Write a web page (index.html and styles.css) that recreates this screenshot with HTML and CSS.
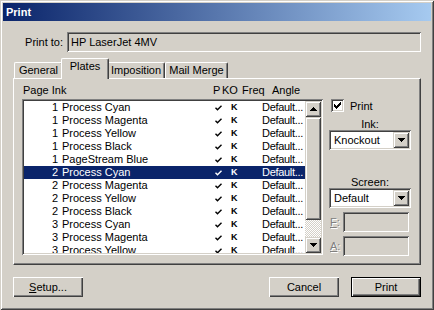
FILE: index.html
```html
<!DOCTYPE html>
<html lang="en">
<head>
  <meta charset="UTF-8">
  <title>Print</title>
  <link rel="stylesheet" href="styles.css">
</head>
<body>
  <div class="window">
    <div class="titlebar">Print</div>

    <div class="content">
      <div class="printto">
        <label>Print to:</label>
        <div class="field wide">HP LaserJet 4MV</div>
      </div>

      <div class="tabs">
        <div class="tab t-general">General</div>
        <div class="tab t-plates active">Plates</div>
        <div class="tab t-impo">Imposition</div>
        <div class="tab t-mail">Mail Merge</div>
      </div>

      <div class="panel">
        <div class="left">
          <div class="colhead">
            <span class="h-page">Page Ink</span>
            <span class="h-p">P</span>
            <span class="h-ko">KO</span>
            <span class="h-freq">Freq</span>
            <span class="h-angle">Angle</span>
          </div>

          <div class="list">
            <div class="rows" id="rows"></div>
            <div class="scrollbar">
              <div class="sb-btn">
                <svg width="7" height="4" viewBox="0 0 7 4" shape-rendering="crispEdges"><path d="M3 0h1v1h1v1h1v1h1v1H0V3h1V2h1V1h1z" fill="#000"/></svg>
              </div>
              <div class="sb-thumb"></div>
              <div class="sb-track"></div>
              <div class="sb-btn">
                <svg width="7" height="4" viewBox="0 0 7 4" shape-rendering="crispEdges"><path d="M0 0h7v1H6v1H5v1H4v1H3V3H2V2H1V1H0z" fill="#000"/></svg>
              </div>
            </div>
          </div>
        </div>

        <div class="side">
          <div class="check-row">
            <div class="box">
              <svg width="7" height="7" viewBox="0 0 7 7" shape-rendering="crispEdges"><path d="M6 0h1v3H6v1H5v1H4v1H3v1H2V6H1V5H0V2h1v1h1v1h1V3h1V2h1V1h1z" fill="#000"/></svg>
            </div>
            <span>Print</span>
          </div>

          <div class="side-label">Ink:</div>
          <div class="select">
            <span class="sel-text">Knockout</span>
            <div class="sel-btn">
              <svg width="7" height="4" viewBox="0 0 7 4" shape-rendering="crispEdges"><path d="M0 0h7v1H6v1H5v1H4v1H3V3H2V2H1V1H0z" fill="#000"/></svg>
            </div>
          </div>

          <div class="side-label screen">Screen:</div>
          <div class="select">
            <span class="sel-text">Default</span>
            <div class="sel-btn">
              <svg width="7" height="4" viewBox="0 0 7 4" shape-rendering="crispEdges"><path d="M0 0h7v1H6v1H5v1H4v1H3V3H2V2H1V1H0z" fill="#000"/></svg>
            </div>
          </div>

          <div class="frow">
            <label class="disabled"><u>F</u>:</label>
            <div class="field small"></div>
          </div>
          <div class="frow">
            <label class="disabled"><u>A</u>:</label>
            <div class="field small"></div>
          </div>
        </div>
      </div>

      <div class="buttons">
        <div class="push"><u>S</u>etup...</div>
        <div class="push cancel">Cancel</div>
        <div class="push default">Print</div>
      </div>
    </div>
  </div>

  <script>
    var plates = [
      [1, 'Process Cyan'], [1, 'Process Magenta'], [1, 'Process Yellow'],
      [1, 'Process Black'], [1, 'PageStream Blue'], [2, 'Process Cyan'],
      [2, 'Process Magenta'], [2, 'Process Yellow'], [2, 'Process Black'],
      [3, 'Process Cyan'], [3, 'Process Magenta'], [3, 'Process Yellow']
    ];
    var tick = '<svg width="7" height="6" viewBox="0 0 7 6"><path d="M0.5 2.8 L2.5 4.8 L6.5 0.8" stroke="currentColor" stroke-width="1.4" fill="none"/></svg>';
    var html = '';
    plates.forEach(function (p, i) {
      html += '<div class="row' + (i === 5 ? ' selected' : '') + '">' +
        '<span class="num">' + p[0] + '</span>' +
        '<span class="name">' + p[1] + '</span>' +
        '<span class="chk">' + tick + '</span>' +
        '<span class="ko">K</span>' +
        '<span class="ang">Default...</span>' +
        '</div>';
    });
    document.getElementById('rows').innerHTML = html;
  </script>
</body>
</html>
```

FILE: styles.css
```css
* {
  box-sizing: border-box;
}
body {
  margin: 0;
  background: #d4d0c8;
  font-family: "Liberation Sans", Arial, sans-serif;
  font-size: 11px;
  color: #000;
}
.window {
  width: 434px;
  height: 310px;
  padding: 3px;
  background: #d4d0c8;
  box-shadow: inset 1px 1px #d4d0c8, inset -1px -1px #404040, inset 2px 2px #fff, inset -2px -2px #808080;
}
.titlebar {
  height: 18px;
  line-height: 18px;
  padding-left: 3px;
  color: #fff;
  font-weight: bold;
  background: linear-gradient(to right, #0a246a, #a6caf0);
}
.content {
  padding: 0 10px;
}

/* sunken / raised edges */
.field,
.list,
.select,
.box {
  box-shadow: inset 1px 1px #808080, inset -1px -1px #fff, inset 2px 2px #404040, inset -2px -2px #d4d0c8;
}
.printto {
  display: flex;
  align-items: center;
  margin-top: 11px;
  height: 20px;
}
.printto label {
  width: 54px;
  text-align: right;
  padding-right: 4px;
}
.field {
  height: 20px;
  line-height: 20px;
  padding: 0 4px;
  background: #d4d0c8;
}
.field.wide {
  width: 354px;
}
.field.small {
  width: 66px;
}

/* tabs */
.tabs {
  display: flex;
  align-items: flex-end;
  height: 20px;
  margin-top: 6px;
  padding-left: 1px;
  position: relative;
  z-index: 1;
}
.tab {
  height: 16px;
  line-height: 14px;
  text-align: center;
  background: #d4d0c8;
  border-top: 1px solid #fff;
  border-left: 1px solid #fff;
  border-right: 1px solid #404040;
  border-radius: 2px 2px 0 0;
  box-shadow: inset -1px 0 #808080;
}
.t-general { width: 49px; }
.t-impo { width: 58px; }
.t-mail { width: 63px; }
.tab.active {
  width: 48px;
  height: 21px;
  line-height: 15px;
  margin: 0 -2px -1px;
  position: relative;
  z-index: 2;
}

.panel {
  display: flex;
  height: 187px;
  border-top: 1px solid #fff;
  border-left: 1px solid #fff;
  border-right: 1px solid #404040;
  border-bottom: 1px solid #404040;
  box-shadow: inset -1px -1px #808080;
}
.left {
  padding-left: 8px;
}
.colhead {
  display: flex;
  height: 20px;
  padding: 5px 0 0 1px;
  line-height: 13px;
  white-space: nowrap;
}
.h-page { width: 190px; }
.h-p { width: 9px; }
.h-ko { width: 20px; }
.h-freq { width: 30px; }

.list {
  display: flex;
  width: 301px;
  height: 156px;
  padding: 2px;
  background: #fff;
}
.rows {
  width: 281px;
  overflow: hidden;
  background: #fff;
}
.row {
  display: grid;
  grid-template-columns: 34px 151px 19px 32px 45px;
  height: 13px;
  line-height: 13px;
  white-space: nowrap;
}
.row.selected {
  background: #0a246a;
  color: #fff;
}
.num {
  text-align: right;
}
.name {
  padding-left: 4px;
}
.chk {
  padding-left: 6px;
  display: flex;
  align-items: center;
}
.ko {
  padding-left: 3px;
  font-size: 9px;
  font-weight: bold;
}
.ang {
  padding-left: 2px;
  letter-spacing: -0.3px;
}

.scrollbar {
  display: flex;
  flex-direction: column;
  width: 16px;
}
.sb-btn,
.sb-thumb,
.sel-btn {
  background: #d4d0c8;
  box-shadow: inset 1px 1px #d4d0c8, inset -1px -1px #404040, inset 2px 2px #fff, inset -2px -2px #808080;
}
.sb-btn {
  height: 16px;
  display: flex;
  align-items: center;
  justify-content: center;
}
.sb-thumb {
  height: 103px;
}
.sb-track {
  flex: 1;
  background: repeating-conic-gradient(#fff 0 25%, #d4d0c8 0 50%) 0 0 / 2px 2px;
}

/* right hand controls */
.side {
  width: 82px;
  margin-left: 6px;
  padding-top: 20px;
}
.check-row {
  display: flex;
  align-items: center;
  gap: 6px;
  height: 13px;
  padding-left: 2px;
}
.box {
  width: 13px;
  height: 13px;
  background: #fff;
  display: flex;
  align-items: center;
  justify-content: center;
}
.side-label {
  margin-top: 6px;
  line-height: 12px;
  text-align: center;
}
.side-label.screen {
  margin-top: 26px;
}
.select {
  display: flex;
  height: 20px;
  padding: 2px;
  background: #fff;
}
.sel-text {
  flex: 1;
  line-height: 16px;
  padding-left: 3px;
}
.sel-btn {
  width: 16px;
  height: 16px;
  display: flex;
  align-items: center;
  justify-content: center;
}
.frow {
  display: flex;
  align-items: center;
  height: 20px;
  margin-top: 4px;
}
.frow label {
  width: 14px;
  padding-left: 1px;
}
.disabled {
  color: #808080;
  text-shadow: 1px 1px #fff;
}

/* bottom buttons */
.buttons {
  display: flex;
  margin-top: 12px;
}
.push {
  width: 70px;
  height: 20px;
  line-height: 20px;
  text-align: center;
  background: #d4d0c8;
  box-shadow: inset 1px 1px #fff, inset -1px -1px #404040, inset -2px -2px #808080;
}
.push.cancel {
  margin-left: auto;
  margin-right: 12px;
}
.push.default {
  box-shadow: inset 0 0 0 1px #000, inset 2px 2px #fff, inset -2px -2px #404040, inset -3px -3px #808080;
}
```
